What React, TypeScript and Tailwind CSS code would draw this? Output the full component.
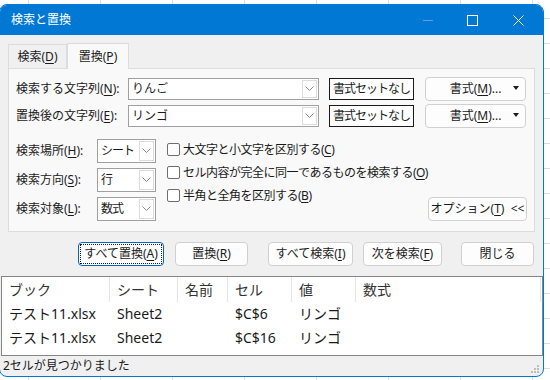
import type { ReactNode } from 'react'

const font = "font-['Noto_Sans','Noto_Sans_CJK_JP',sans-serif]"

function U({ children }: { children: ReactNode }) {
  return <span className="underline underline-offset-[2px] decoration-1">{children}</span>
}

function Chevron() {
  return (
    <svg width="9" height="6" viewBox="0 0 9 6">
      <polyline points="0.5,0.5 4.5,4.5 8.5,0.5" fill="none" stroke="#8a8a8a" strokeWidth="1" />
    </svg>
  )
}

// text input with the little drop-down box on the right
function Combo({ value }: { value: string }) {
  return (
    <div className="flex h-[22px] w-[191px] items-stretch border border-[#a0a0a0] bg-white">
      <div className="flex flex-1 items-center pl-[3px] text-[12px] leading-none">{value}</div>
      <div className="m-[1px] flex w-[15px] items-center justify-center border border-[#dcdcdc] bg-white">
        <Chevron />
      </div>
    </div>
  )
}

function Select({ value }: { value: string }) {
  return (
    <div className="flex h-[24px] w-[59px] items-stretch border border-[#a0a0a0] bg-white">
      <div className="flex flex-1 items-center overflow-hidden whitespace-nowrap pl-[3px] text-[12px] leading-none tracking-[-1px]">
        {value}
      </div>
      <div className="m-[1px] flex w-[15px] items-center justify-center border border-[#dcdcdc] bg-white">
        <Chevron />
      </div>
    </div>
  )
}

function Btn({ children, w, className = '' }: { children: ReactNode; w: string; className?: string }) {
  return (
    <div
      className={`flex h-[24px] items-center justify-center whitespace-nowrap rounded-[4px] border border-[#d0d0d0] bg-[#fdfdfd] text-[12px] leading-none ${w} ${className}`}
    >
      {children}
    </div>
  )
}

function NoFormat() {
  return (
    <div className="ml-[10px] flex h-[22px] w-[85px] items-center justify-center whitespace-nowrap border-[1.5px] border-[#1a1a1a] bg-white text-[12px] leading-none tracking-[-1px]">
      書式セットなし
    </div>
  )
}

function Check({ children }: { children: ReactNode }) {
  return (
    <div className="flex h-[23px] items-center">
      <div className="h-[13px] w-[13px] rounded-[2px] border border-[#6e6e6e] bg-white" />
      <div className="ml-[3px] whitespace-nowrap text-[12px] leading-none tracking-[-0.5px]">{children}</div>
    </div>
  )
}

const rows = [
  { book: 'テスト11.xlsx', sheet: 'Sheet2', cell: '$C$6', value: 'リンゴ' },
  { book: 'テスト11.xlsx', sheet: 'Sheet2', cell: '$C$16', value: 'リンゴ' },
]

export default function App() {
  return (
    <div className={`relative h-[380px] w-[550px] overflow-hidden bg-white ${font} text-[#1a1a1a]`}>
      {/* spreadsheet behind the dialog */}
      <div className="h-full w-full bg-[repeating-linear-gradient(90deg,transparent_0_28px,#dadada_28px_29px,transparent_29px_72px)]">
        <div className="h-full w-full bg-[repeating-linear-gradient(180deg,transparent_0_18px,#dadada_18px_19px,transparent_19px_25px)]" />
      </div>

      {/* dialog window */}
      <div className="absolute left-[-1px] top-[4px] flex w-[545px] flex-col overflow-hidden rounded-[8px] border border-[#0078d4] bg-[#f0f0f0]">
        {/* title bar */}
        <div className="flex h-[30px] items-center bg-[#0078d4] text-white">
          <div className="ml-[11px] text-[12px] leading-none">検索と置換</div>
          <div className="ml-auto flex items-center">
            <div className="mr-[34px] h-px w-[10px] bg-[#5aa2e6]" />
            <svg width="11" height="11" viewBox="0 0 11 11" className="mr-[35px]">
              <rect x="0.5" y="0.5" width="10" height="10" fill="none" stroke="white" strokeWidth="1" />
            </svg>
            <svg width="11" height="11" viewBox="0 0 11 11" className="mr-[19px]">
              <path d="M0.5 0.5 L10.5 10.5 M10.5 0.5 L0.5 10.5" stroke="white" strokeWidth="1" />
            </svg>
          </div>
        </div>

        {/* body */}
        <div className="flex flex-col pl-px">
          {/* tabs */}
          <div className="ml-[7px] mt-[8px] flex h-[25px] items-end">
            <div className="flex h-[24px] w-[59px] items-center justify-center border border-b-0 border-[#dcdcdc] text-[12px] leading-none">
              検索(<U>D</U>)
            </div>
            <div className="relative z-10 -mb-px flex h-[26px] w-[62px] items-center justify-center border border-b-0 border-[#dcdcdc] bg-[#f9f9f9] text-[12px] leading-none">
              置換(<U>P</U>)
            </div>
          </div>

          {/* tab panel */}
          <div className="ml-[7px] flex h-[164px] w-[527px] flex-col border border-[#dcdcdc] bg-[#f9f9f9] pl-[7px] pr-[7px] pt-[9px]">
            <div className="flex h-[22px] items-center">
              <div className="w-[112px] whitespace-nowrap text-[12px] leading-none">
                検索する文字列(<U>N</U>):
              </div>
              <Combo value="りんご" />
              <NoFormat />
              <Btn w="w-[101px] h-[23px] ml-[11px] relative">
                書式(<U>M</U>)...
                <span className="absolute right-[6px] top-[8px] h-0 w-0 border-x-[3px] border-t-[4px] border-x-transparent border-t-[#1a1a1a]" />
              </Btn>
            </div>
            <div className="mt-[5px] flex h-[22px] items-center">
              <div className="w-[112px] whitespace-nowrap text-[12px] leading-none">
                置換後の文字列(<U>E</U>):
              </div>
              <Combo value="リンゴ" />
              <NoFormat />
              <Btn w="w-[101px] h-[23px] ml-[11px] relative">
                書式(<U>M</U>)...
                <span className="absolute right-[6px] top-[8px] h-0 w-0 border-x-[3px] border-t-[4px] border-x-transparent border-t-[#1a1a1a]" />
              </Btn>
            </div>

            {/* options */}
            <div className="mt-[12px] flex">
              <div className="flex flex-col gap-[5px]">
                <div className="flex h-[24px] items-center">
                  <div className="w-[81px] whitespace-nowrap text-[12px] leading-none">
                    検索場所(<U>H</U>):
                  </div>
                  <Select value="シート" />
                </div>
                <div className="flex h-[24px] items-center">
                  <div className="w-[81px] whitespace-nowrap text-[12px] leading-none">
                    検索方向(<U>S</U>):
                  </div>
                  <Select value="行" />
                </div>
                <div className="flex h-[24px] items-center">
                  <div className="w-[81px] whitespace-nowrap text-[12px] leading-none">
                    検索対象(<U>L</U>):
                  </div>
                  <Select value="数式" />
                </div>
              </div>
              <div className="ml-[11px] mt-[-1px] flex flex-col">
                <Check>
                  大文字と小文字を区別する(<U>C</U>)
                </Check>
                <Check>
                  セル内容が完全に同一であるものを検索する(<U>O</U>)
                </Check>
                <Check>
                  半角と全角を区別する(<U>B</U>)
                </Check>
              </div>
              <Btn w="w-[102px]" className="ml-auto self-end">
                オプション(<U>T</U>)&nbsp;&nbsp;&lt;&lt;
              </Btn>
            </div>
          </div>

          {/* action buttons */}
          <div className="mt-[10px] flex h-[24px] pl-[77px]">
            <div className="flex h-[24px] w-[86px] rounded-[4px] border border-[#0067c0] bg-[#fdfdfd] p-px">
              <div className="flex flex-1 items-center justify-center whitespace-nowrap border border-dotted border-[#1a1a1a] text-[12px] leading-none">
                すべて置換(<U>A</U>)
              </div>
            </div>
            <Btn w="w-[73px]" className="ml-[11px]">
              置換(<U>R</U>)
            </Btn>
            <Btn w="w-[85px]" className="ml-[20px]">
              すべて検索(<U>I</U>)
            </Btn>
            <Btn w="w-[79px]" className="ml-[10px]">
              次を検索(<U>F</U>)
            </Btn>
            <Btn w="w-[73px]" className="ml-[19px]">
              閉じる
            </Btn>
          </div>
        </div>

        {/* results list */}
        <div className="mt-[10px] ml-px h-[80px] w-[542px] border border-[#868686] bg-white text-[14px] leading-none">
          <div className="grid h-[25px] grid-cols-[108px_68px_50px_64px_64px_185px]">
            {['ブック', 'シート', '名前', 'セル', '値', '数式'].map((h) => (
              <div key={h} className="flex items-center border-r border-[#e5e5e5] pl-[7px] text-[#333]">
                {h}
              </div>
            ))}
          </div>
          {rows.map((r) => (
            <div key={r.cell} className="grid h-[24px] grid-cols-[108px_68px_50px_64px_64px_185px]">
              <div className="flex items-center pl-[7px]">{r.book}</div>
              <div className="flex items-center pl-[7px]">{r.sheet}</div>
              <div />
              <div className="flex items-center pl-[7px]">{r.cell}</div>
              <div className="flex items-center pl-[7px]">{r.value}</div>
              <div />
            </div>
          ))}
        </div>

        {/* status bar */}
        <div className="relative flex h-[20px] items-center pl-[3px] text-[12px] leading-none">
          2セルが見つかりました
          <svg width="9" height="9" viewBox="0 0 9 9" className="absolute bottom-[2px] right-[3px]">
            <rect x="6" y="0" width="2" height="2" fill="#bdbdbd" />
            <rect x="3" y="3" width="2" height="2" fill="#bdbdbd" />
            <rect x="6" y="3" width="2" height="2" fill="#bdbdbd" />
            <rect x="0" y="6" width="2" height="2" fill="#bdbdbd" />
            <rect x="3" y="6" width="2" height="2" fill="#bdbdbd" />
            <rect x="6" y="6" width="2" height="2" fill="#bdbdbd" />
          </svg>
        </div>
      </div>
    </div>
  )
}
